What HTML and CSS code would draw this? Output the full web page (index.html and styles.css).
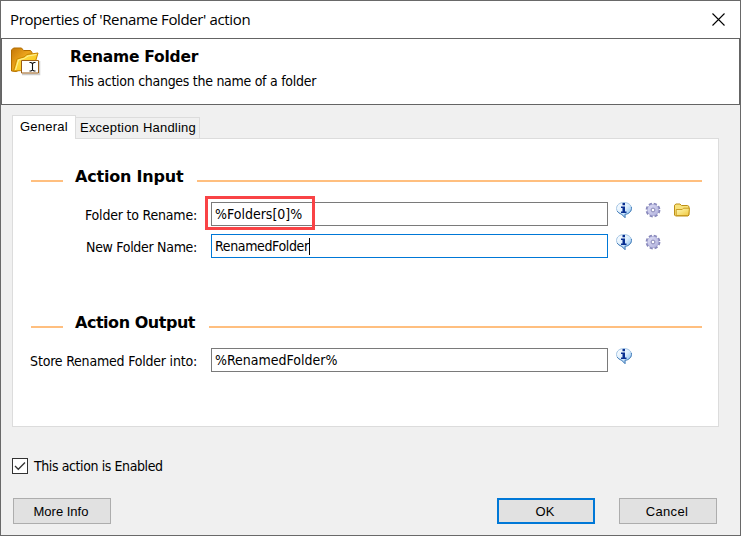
FILE: index.html
```html
<!DOCTYPE html>
<html lang="en">
<head>
<meta charset="utf-8">
<title>Properties of 'Rename Folder' action</title>
<link rel="stylesheet" href="styles.css">
</head>
<body>
<svg class="defs" width="0" height="0" aria-hidden="true">
  <defs>
    <linearGradient id="bubble" x1="0" y1="0" x2="1" y2="1"><stop offset="0" stop-color="#fff"/><stop offset=".5" stop-color="#dceefd"/><stop offset="1" stop-color="#6fb0ee"/></linearGradient>
    <linearGradient id="metal" x1="0" y1="0" x2="1" y2="1"><stop offset="0" stop-color="#dedef6"/><stop offset="1" stop-color="#b0b0dc"/></linearGradient>
    <linearGradient id="yellow" x1="0" y1="0" x2="1" y2="1"><stop offset="0" stop-color="#fffbb8"/><stop offset="1" stop-color="#f0c840"/></linearGradient>
    <linearGradient id="brown" x1="0" y1="0" x2="1" y2="1"><stop offset="0" stop-color="#c47708"/><stop offset=".5" stop-color="#eda51c"/><stop offset="1" stop-color="#ad6400"/></linearGradient>
    <linearGradient id="gold" x1="0" y1="0" x2="1" y2="1"><stop offset="0" stop-color="#ffec62"/><stop offset="1" stop-color="#f7b500"/></linearGradient>
    <symbol id="info" viewBox="0 0 18 18">
      <path d="M9 1.500C5 1.500 1.500 3.800 1.500 7.500c0 3 2.300 4.800 5 5.600l3.500 3.600v-3.400c4-.4 6.500-2.800 6.500-5.800 0-3.700-3.500-6-7.500-6z" fill="url(#bubble)" stroke="#a3c4e4" stroke-width="1"/>
      <path d="M16.400 6C17 10 14 13 10 13.300v3.300L6.500 13.100C4.500 12.500 3 11.500 2.200 10" fill="none" stroke="#4a82bc" stroke-width="1"/>
      <path d="M7.500 2H10v2.300H7.500zM6 5.500h4v5h1.500V12H6v-1.500h1.500V7H6z" fill="#082f91"/>
    </symbol>
    <symbol id="gear" viewBox="0 0 16 16">
      <circle cx="8" cy="8" r="6.300" fill="none" stroke="#8686ba" stroke-width="2.200" stroke-dasharray="3.100 1.848"/>
      <circle cx="8" cy="8" r="5.700" fill="url(#metal)" stroke="#9c9ccb" stroke-width=".6"/>
      <circle cx="8" cy="8" r="1.900" fill="#fff" stroke="#8585b5" stroke-width="1"/>
    </symbol>
    <symbol id="browse" viewBox="0 0 18 16">
      <path d="M1.500 13V3.200L3 2h4l1.500 1.500h6l1.500 1V13l-1 1H2.500z" fill="#f8e27b" stroke="#bd8f16"/>
      <path d="M3.200 13.500V7.500h6l1.300-1.300h6l-.8 6.300-1.200 1z" fill="url(#yellow)" stroke="#c49518" stroke-width=".9"/>
    </symbol>
  </defs>
</svg>
<main class="dialog">
  <header class="titlebar">
    <h1 class="title">Properties of 'Rename Folder' action</h1>
    <svg class="close" width="13" height="13" viewBox="0 0 13 13"><path d="M.5.500l12 12M12.500.500l-12 12" stroke="#000" stroke-width="1.100"/></svg>
  </header>
  <section class="banner">
    <svg class="banner-icon" width="32" height="32" viewBox="0 0 32 32">
      <path d="M1.500 24V3l2-2h8l2 2.500h7l1.500 2v12L6 24.500z" fill="url(#brown)" stroke="#b26c00"/>
      <path d="M3.500 24 7 12l7-2 3-2.500L28 6l-5 17z" fill="url(#gold)" stroke="#c98600"/>
      <path d="M5.500 23 8.500 13l6-1.700L18 9l8.500-1.500" fill="none" stroke="#fff19a"/>
      <path d="M12 27.500h17.500V14" fill="none" stroke="#aaa" stroke-opacity=".6" stroke-width="1.500"/>
      <path d="M11.500 13.500h17v12.500h-17z" fill="#fff" stroke="#9a5c16"/>
      <path d="M19.500 15.500h1.500l1.500 1 1.500-1h1.500M22.500 16.500v7M19.500 24h1.500l1.500-1 1.500 1h1.500" fill="none" stroke="#111" stroke-width="1.100"/>
    </svg>
    <div>
      <h2 class="banner-title">Rename Folder</h2>
      <p class="banner-text">This action changes the name of a folder</p>
    </div>
  </section>
  <nav class="tabs">
    <span class="tab active">General</span>
    <span class="tab">Exception Handling</span>
  </nav>
  <section class="panel">
    <h3 class="section">Action Input</h3>
    <div class="row">
      <label class="tight">Folder to Rename:</label>
      <div class="field marked">%Folders[0]%</div>
      <div class="icons"><svg width="18" height="18"><use href="#info"/></svg><svg class="gear" width="16" height="16"><use href="#gear"/></svg><svg class="browse" width="18" height="16"><use href="#browse"/></svg></div>
    </div>
    <div class="row">
      <label class="tighter">New Folder Name:</label>
      <div class="field focused"><span class="tighter">RenamedFolder</span><i class="caret"></i></div>
      <div class="icons"><svg width="18" height="18"><use href="#info"/></svg><svg class="gear" width="16" height="16"><use href="#gear"/></svg></div>
    </div>
    <h3 class="section output">Action Output</h3>
    <div class="row">
      <label class="tight">Store Renamed Folder into:</label>
      <div class="field">%RenamedFolder%</div>
      <div class="icons"><svg width="18" height="18"><use href="#info"/></svg></div>
    </div>
  </section>
  <div class="enabled">
    <span class="checkbox"><svg width="14" height="14" viewBox="0 0 14 14"><path d="M2 7l3.300 3.300L12 3.500" fill="none" stroke="#333" stroke-width="1.300"/></svg></span>
    <span class="enabled-text">This action is Enabled</span>
  </div>
  <footer class="buttons">
    <button class="more">More Info</button>
    <button class="primary">OK</button>
    <button class="cancel">Cancel</button>
  </footer>
</main>
</body>
</html>
```
FILE: styles.css
```css
*, *::before, *::after { box-sizing: border-box; }
body { margin: 0; overflow: hidden; color: #000; font: 14px/18px "DejaVu Sans Condensed", "DejaVu Sans", sans-serif; font-stretch: condensed; }
h1, h2, h3, p { margin: 0; font-size: inherit; font-weight: inherit; white-space: nowrap; }
.defs { position: absolute; }
.dialog { display: flex; flex-direction: column; width: 741px; height: 536px; border: 1px solid #696969; background: #f0f0f0; }
.titlebar { display: flex; justify-content: space-between; height: 37px; padding: 8px 15px 0 9px; background: #fff; }
.title { font: 15px/20px "Open Sans", sans-serif; letter-spacing: -.37px; }
.close { margin-top: 4px; }
.banner { display: flex; height: 67px; border: 1px solid #646464; background: #fff; }
.banner-icon { margin: 8px 27px 0 8px; }
.banner-title { margin: 8px 0 0 1px; font: bold 15.5px/20px "DejaVu Sans", sans-serif; letter-spacing: -.24px; }
.banner-text { margin-top: 5px; letter-spacing: -.28px; }
.tabs { display: flex; align-items: flex-end; height: 33px; padding-left: 11px; font: 13px/20px "Liberation Sans", sans-serif; white-space: nowrap; }
.tab { width: 124px; height: 21px; padding-left: 4px; border: 1px solid #dcdcdc; border-left: 0; border-bottom: 0; letter-spacing: .22px; }
.tab.active { z-index: 1; width: 64px; height: 24px; margin-bottom: -1px; padding: 1px 0 0 7px; border-left: 1px solid #dcdcdc; background: #fff; }
.panel { width: 707px; height: 289px; margin-left: 11px; padding: 27px 16px 0 17px; border: 1px solid #dcdcdc; background: #fff; }
.section { display: flex; height: 20px; margin-left: 1px; align-items: center; font: bold 16px/22px "DejaVu Sans", sans-serif; letter-spacing: -.2px; padding-top: 2px; }
.section::before, .section::after { content: ""; height: 2px; margin-top: 8px; background: #ffbf7f; }
.section::before { width: 32px; margin-right: 12px; }
.section::after { flex: 1; margin-left: 14px; }
.section.output { margin-top: 54px; letter-spacing: -.47px; }
.row { display: flex; height: 24px; margin-top: 8px; }
.section + .row { margin-top: 16px; }
.row label { display: flex; justify-content: flex-end; width: 181px; padding: 4px 14px 0 0; white-space: nowrap; }
.tight { letter-spacing: -.2px; }
.tighter { letter-spacing: -.3px; }
.field { position: relative; width: 397px; padding: 2px 0 0 3px; border: 1px solid #7a7a7a; background: #fff; white-space: nowrap; }
.focused { border-color: #0078d7; }
.focused .tighter { letter-spacing: -.36px; }
.caret { display: inline-block; width: 1px; height: 17px; background: #000; vertical-align: -4px; }
.marked::after { content: ""; position: absolute; left: -7px; top: -7px; width: 110px; height: 34px; border: 3px solid #f94346; }
.icons { display: flex; margin: -1px 0 0 7px; }
.gear { margin-left: 12px; margin-top: 1px; }
.browse { margin: 1px 0 0 12px; }
.enabled { display: flex; align-items: center; height: 18px; margin: 30px 0 0 11px; gap: 6px; }
.enabled-text { letter-spacing: -.4px; }
.checkbox { width: 16px; height: 16px; border: 1px solid #333; background: #fff; }
.checkbox svg { display: block; }
.buttons { display: flex; margin: 23px 0 0 12px; }
button { width: 98px; height: 26px; padding: 2px 2px 0 0; border: 1px solid #adadad; border-radius: 0; background: #e1e1e1; color: #000; font: 13px/20px "Liberation Sans", sans-serif; }
.more { margin-right: 386px; }
.primary { margin-right: 24px; border: 2px solid #0078d7; }
.cancel { letter-spacing: .3px; }
```
